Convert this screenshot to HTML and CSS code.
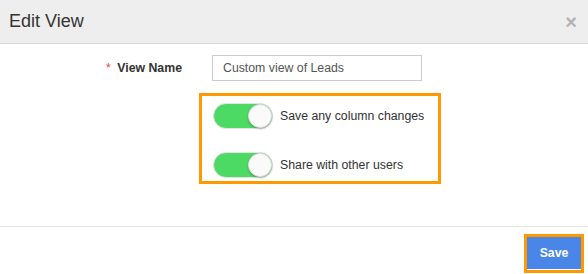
FILE: index.html
```html
<!DOCTYPE html>
<html lang="en">
<head>
    <meta charset="UTF-8">
    <title>Edit View</title>
    <link rel="stylesheet" href="styles.css">
</head>
<body>
    <div class="modal">
        <div class="modal-header">
            <h3>Edit View</h3>
            <span class="close">&times;</span>
        </div>

        <div class="modal-body">
            <div class="form-row">
                <label for="view-name"><span class="req">*</span> View Name</label>
                <input type="text" id="view-name" value="Custom view of Leads">
            </div>

            <div class="options">
                <div class="option">
                    <span class="toggle on"><span class="knob"></span></span>
                    <span class="option-text">Save any column changes</span>
                </div>
                <div class="option">
                    <span class="toggle on"><span class="knob"></span></span>
                    <span class="option-text">Share with other users</span>
                </div>
            </div>
        </div>

        <div class="modal-footer">
            <div class="save-wrap">
                <button type="button">Save</button>
            </div>
        </div>
    </div>
</body>
</html>
```

FILE: styles.css
```css
body {
    font-family: "Liberation Sans", Arial, sans-serif;
    margin: 0;
    background: white;
    color: #333;
}

.modal {
    width: 588px;
    height: 274px;
    display: flex;
    flex-direction: column;
}

.modal-header {
    height: 43px;
    background-color: #eeeeee;
    border-bottom: 1px solid #d9d9d9;
    display: flex;
    align-items: center;
    justify-content: space-between;
    padding: 0 11px 0 9px;
}

.modal-header h3 {
    margin: 0;
    font-size: 18px;
    font-weight: normal;
    color: #333;
}

.close {
    font-size: 20px;
    font-weight: bold;
    color: #b3b3b3;
    line-height: 1;
}

.modal-body {
    flex: 1;
    padding-top: 11px;
}

.form-row {
    display: flex;
    align-items: center;
    height: 26px;
}

.form-row label {
    width: 182px;
    text-align: right;
    font-size: 12.3px;
    font-weight: bold;
    color: #333;
}

.req {
    color: #e04b3f;
    font-weight: normal;
    margin-right: 3px;
}

.form-row input {
    margin-left: 30px;
    width: 210px;
    height: 26px;
    box-sizing: border-box;
    border: 1px solid #ccc;
    padding: 0 10px;
    font-family: "Liberation Sans", Arial, sans-serif;
    font-size: 12.3px;
    color: #555;
}

.options {
    margin: 12px 0 0 199px;
    width: 242px;
    height: 91px;
    box-sizing: border-box;
    border: 3px solid #ff9900;
    padding: 7px 0 0 11px;
    display: flex;
    flex-direction: column;
    gap: 23px;
}

.option {
    display: flex;
    align-items: center;
    height: 26px;
}

.toggle {
    position: relative;
    width: 60px;
    height: 26px;
    box-sizing: border-box;
    border-radius: 13px;
    background: #4cd964;
    border: 1px solid #e3e3e3;
    margin-right: 7px;
}

.knob {
    position: absolute;
    right: 0;
    top: 0;
    width: 24px;
    height: 24px;
    box-sizing: border-box;
    border-radius: 50%;
    background: #fafafa;
    border: 1px solid #ddd;
    box-shadow: 0 1px 2px rgba(0, 0, 0, 0.25);
}

.option-text {
    font-size: 12.3px;
    color: #333;
}

.modal-footer {
    height: 48px;
    border-top: 1px solid #e5e5e5;
    display: flex;
    justify-content: flex-end;
    align-items: flex-start;
    padding: 7px 4px 0 0;
    box-sizing: border-box;
}

.save-wrap {
    border: 3px solid #ff9900;
}

button {
    display: block;
    width: 54px;
    height: 33px;
    background-color: #4a86e8;
    color: white;
    border: none;
    border-bottom: 1px solid #fff;
    font-family: "Liberation Sans", Arial, sans-serif;
    font-size: 12.3px;
    font-weight: bold;
    cursor: pointer;
}
```
